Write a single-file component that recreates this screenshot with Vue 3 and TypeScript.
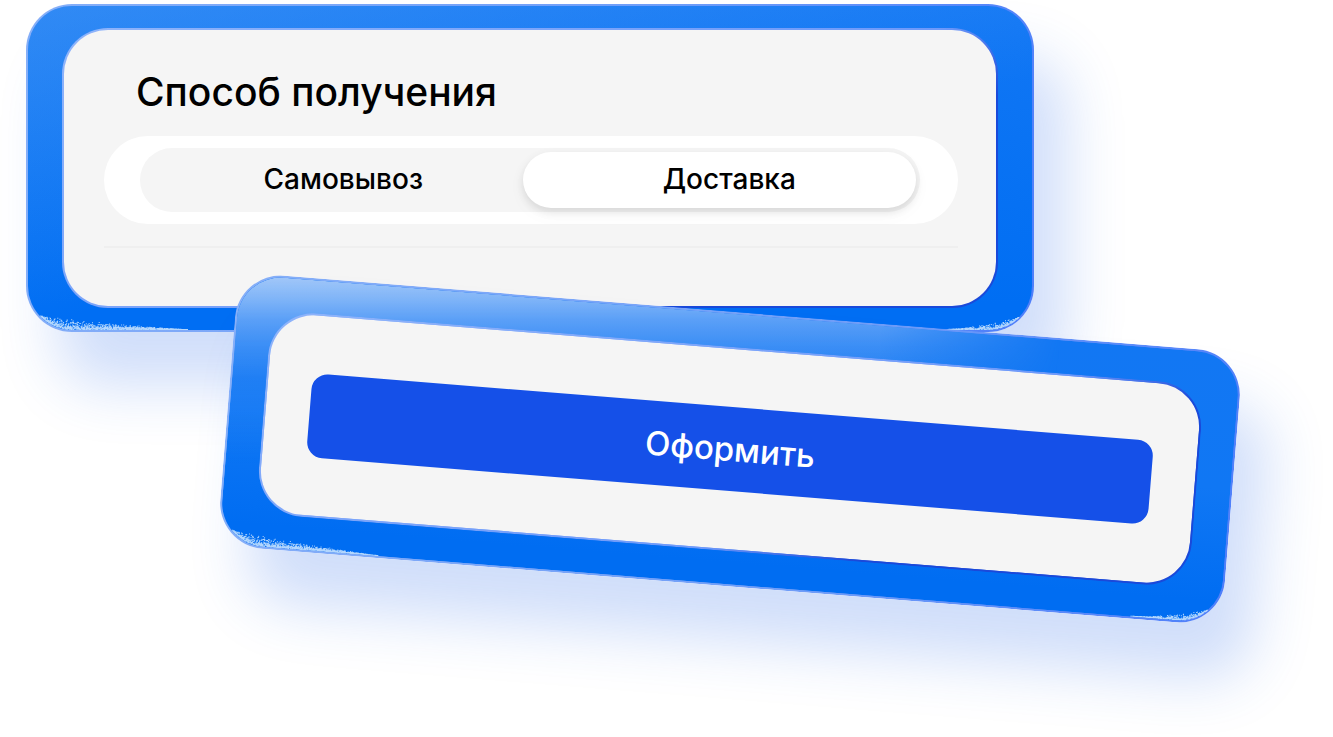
<script setup lang="ts">
import { ref } from 'vue'

interface Option {
  id: string
  label: string
}

const options: Option[] = [
  { id: 'pickup', label: 'Самовывоз' },
  { id: 'delivery', label: 'Доставка' },
]
const selected = ref<string>('delivery')

// Small seeded generator, so the sparkle pattern is the same on every render.
function createRandom(seed: number): () => number {
  let state = seed
  return () => {
    state = (state * 1664525 + 1013904223) % 4294967296
    return state / 4294967296
  }
}

// Builds specks between the card's lower edge (`floor`) and the height `top` at x.
function specks(
  seed: number,
  count: number,
  width: number,
  height: number,
  top: (x: number) => number,
  floor: (x: number) => number,
): string {
  const random = createRandom(seed)
  let path = ''
  for (let i = 0; i < count; i++) {
    const x = random() * width
    const room = top(x) - floor(x)
    const depth = random() * random() * room
    if (room <= 0) continue
    const y = height - 1 - floor(x) - depth
    path += `M${x.toFixed(1)} ${y.toFixed(1)}h1v1h-1z`
  }
  return path
}

const radius = 44
const arc = (d: number): number =>
  d >= radius ? 0 : radius - Math.sqrt(radius * radius - (radius - d) * (radius - d))

const leftSpecks = specks(
  7, 1500, 160, 28,
  (x) => 15 * Math.pow(1 - x / 160, 1.2),
  (x) => arc(x),
)
const rightSpecks = specks(
  23, 620, 90, 28,
  (x) => 13 * Math.pow(x / 80, 1.5),
  (x) => arc(90 - x),
)
</script>

<template>
  <main class="stage">
    <section class="card card-method">
      <svg class="grain grain-left" width="160" height="28" viewBox="0 0 160 28" aria-hidden="true">
        <path :d="leftSpecks" />
      </svg>
      <svg class="grain grain-right" width="90" height="28" viewBox="0 0 90 28" aria-hidden="true">
        <path :d="rightSpecks" />
      </svg>
      <div class="panel panel-method">
        <h1 id="method-title" class="title">Способ получения</h1>
        <div class="switch" role="radiogroup" aria-labelledby="method-title">
          <div class="track">
            <label
              v-for="option in options"
              :key="option.id"
              :for="option.id"
              class="option"
              :class="{ active: selected === option.id }"
            >
              <input
                :id="option.id"
                v-model="selected"
                class="radio"
                type="radio"
                name="method"
                :value="option.id"
              />
              {{ option.label }}
            </label>
          </div>
        </div>
        <hr class="divider" />
      </div>
    </section>

    <section class="card card-submit">
      <div class="glow"></div>
      <svg class="grain grain-left" width="160" height="28" viewBox="0 0 160 28" aria-hidden="true">
        <path :d="leftSpecks" />
      </svg>
      <svg class="grain grain-right" width="90" height="28" viewBox="0 0 90 28" aria-hidden="true">
        <path :d="rightSpecks" />
      </svg>
      <div class="panel panel-submit">
        <button class="submit" type="button">Оформить</button>
      </div>
    </section>
  </main>
</template>

<style>
body {
  background: #ffffff;
}
</style>

<style scoped>
.stage {
  display: flow-root;
  overflow: hidden;
  padding: 4px 0 151px;
  font-family: Inter, "Noto Sans", "Liberation Sans", sans-serif;
  color: #000000;
}

.card {
  position: relative;
  box-sizing: border-box;
  border: 2px solid transparent;
  border-radius: 46px;
  box-shadow: 32px 54px 58px rgba(40, 104, 232, 0.22);
}

.card-method {
  margin: 0 299px 0 26px;
  padding: 22px 34px;
  background:
    linear-gradient(166deg, rgba(104, 172, 245, 0.36), rgba(104, 172, 245, 0) 56%) padding-box,
    linear-gradient(180deg, #1277f4, #006ef3 92%) padding-box,
    linear-gradient(100deg, #86aff8, #6f9df8 60%, #4f7ffa) border-box;
}

.card-submit {
  margin: -20px 99px 0 226px;
  padding: 33px 34px;
  background:
    linear-gradient(180deg, #1277f3, #1077f4 50%, #006df2 92%) padding-box,
    linear-gradient(100deg, #86aff8, #6f9df8 60%, #4f7ffa) border-box;
  transform: rotate(4.6deg);
}

.glow {
  position: absolute;
  inset: 0;
  border-radius: 44px;
  background: linear-gradient(
    175.4deg,
    rgba(190, 215, 249, 0.86),
    rgba(168, 203, 249, 0.74) 24px,
    rgba(150, 192, 250, 0.55) 46px,
    rgba(140, 187, 250, 0.34) 72px,
    rgba(120, 175, 250, 0.15) 104px,
    rgba(120, 175, 250, 0) 190px
  );
  mask-image: linear-gradient(90deg, #000 64%, transparent 82%);
}

.grain {
  position: absolute;
  bottom: 0;
  fill: rgba(222, 240, 255, 0.8);
}

.grain-left {
  left: 0;
}

.grain-right {
  right: 0;
}

.panel {
  position: relative;
  box-sizing: border-box;
  border: 2px solid transparent;
  border-radius: 46px;
  background:
    linear-gradient(#f5f5f5, #f5f5f5) padding-box,
    linear-gradient(150deg, #8fb4fa, #6d99fa 62%, #1a49da 74%) border-box;
}

.panel-method {
  padding: 38px 38px 58px 40px;
}

.title {
  margin: 0 0 20px;
  padding-left: 32px;
  font-size: 39px;
  line-height: 48px;
  font-weight: 500;
}

.switch {
  padding: 12px 38px 12px 36px;
  border-radius: 44px;
  background: #ffffff;
}

.track {
  display: grid;
  grid-template-columns: 379fr 394fr;
  padding: 4px;
  border-radius: 32px;
  background: #f5f5f5;
}

.option {
  display: flex;
  align-items: center;
  justify-content: center;
  position: relative;
  box-sizing: border-box;
  height: 56px;
  padding: 0 0 2px 20px;
  border-radius: 28px;
  font-size: 28px;
  line-height: 32px;
  font-weight: 500;
  cursor: pointer;
}

.option.active {
  background: #ffffff;
  box-shadow: 0 4px 8px rgba(0, 0, 0, 0.1), 0 6px 20px rgba(0, 0, 0, 0.03);
}

.radio {
  position: absolute;
  inset: 0;
  margin: 0;
  appearance: none;
  border-radius: 28px;
  cursor: pointer;
}

.divider {
  height: 2px;
  margin: 22px 0 0;
  border: 0;
  background: #efefef;
}

.panel-submit {
  padding: 58px 44px;
}

.submit {
  display: block;
  width: 100%;
  height: 84px;
  border: 0;
  border-radius: 16px;
  background: #1550e8;
  color: #ffffff;
  font-family: inherit;
  font-size: 33px;
  line-height: 40px;
  font-weight: 500;
  cursor: pointer;
}
</style>
